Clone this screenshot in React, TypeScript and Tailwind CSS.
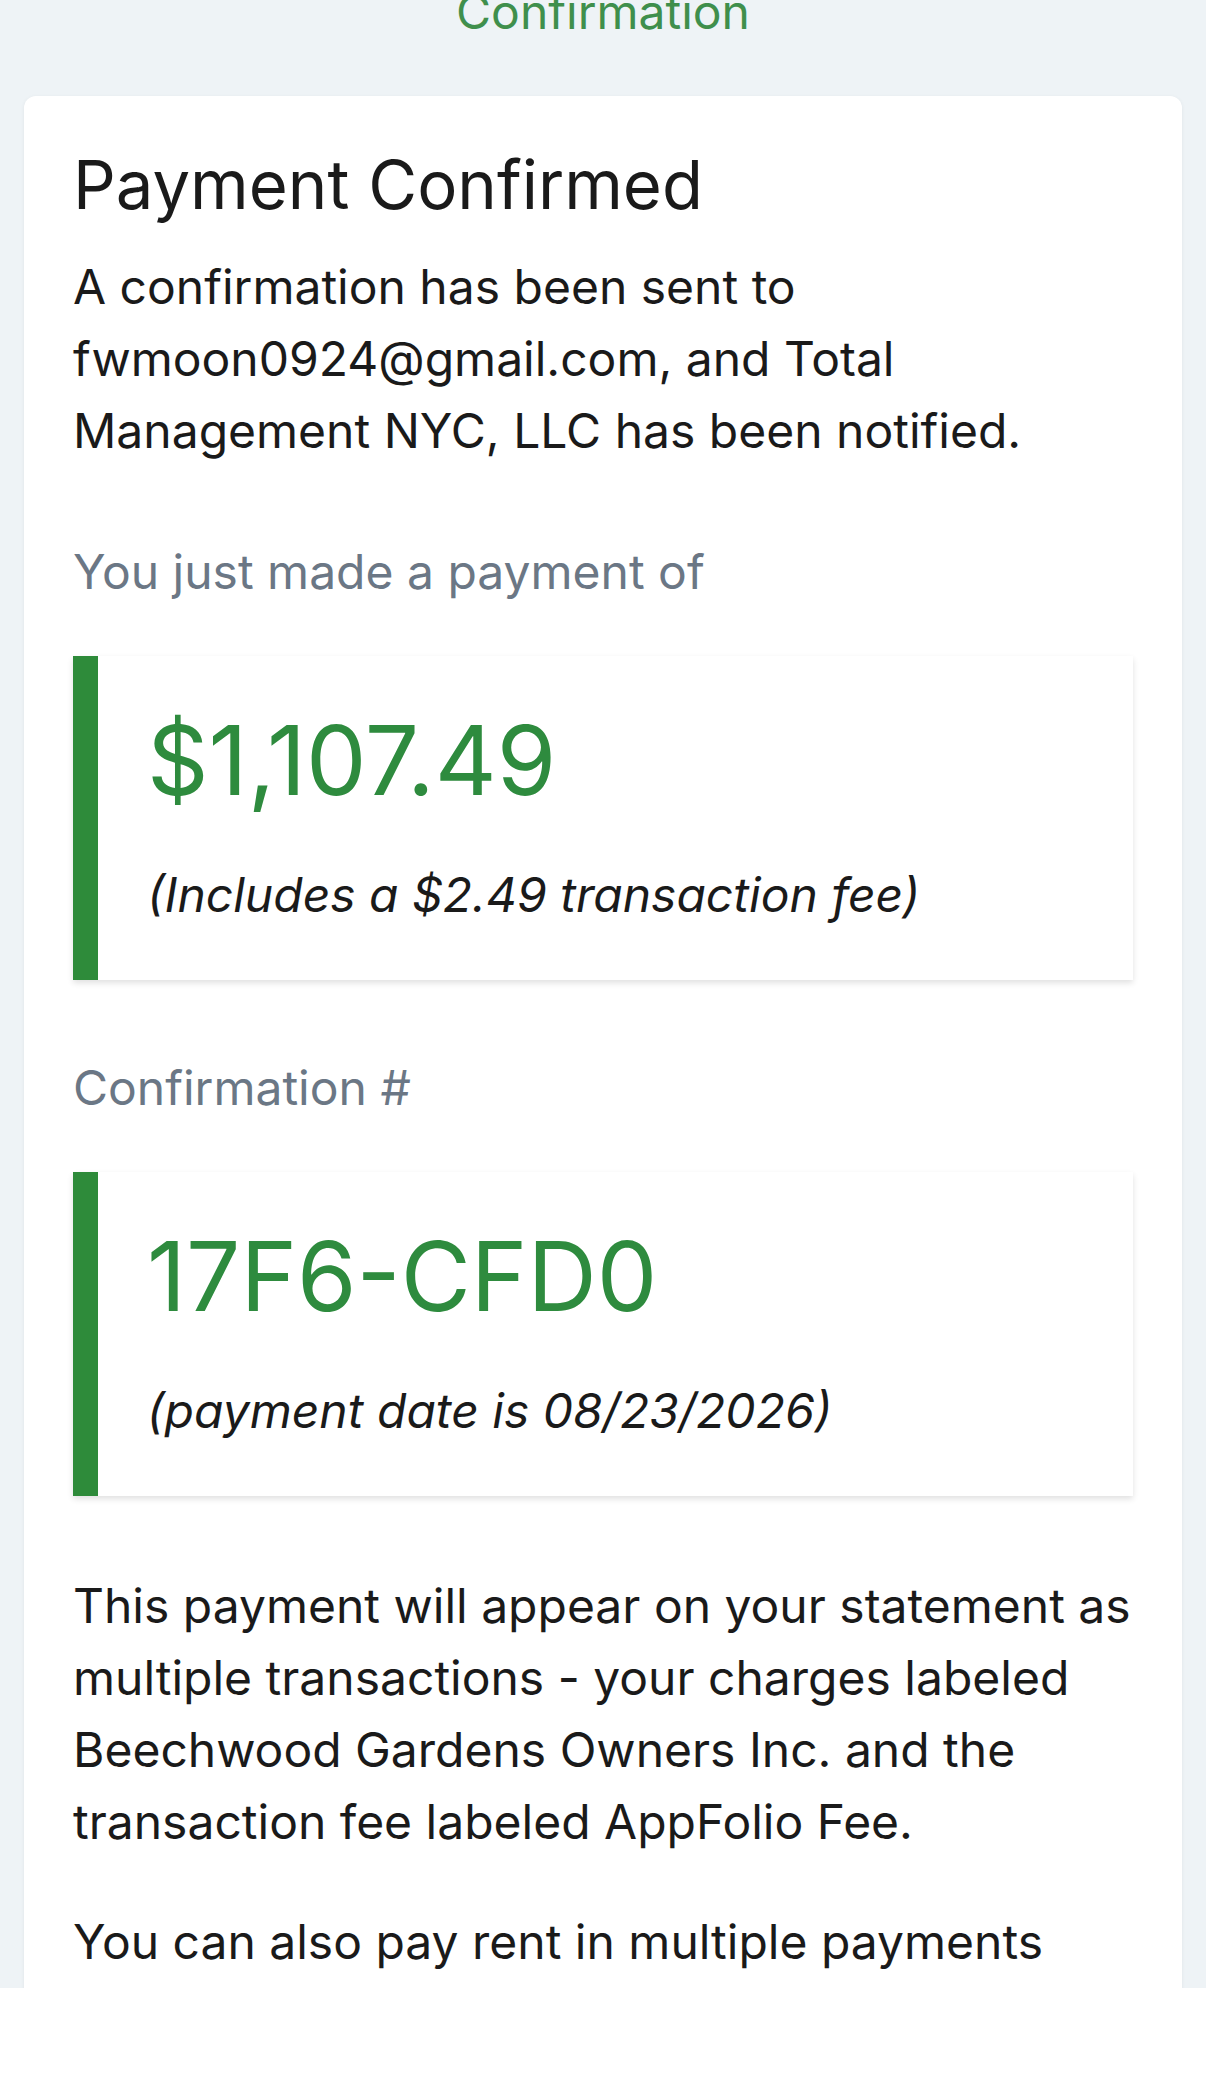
import React from "react";

const green = "text-[#2e8b3e]";

function HighlightBox({ value, note }: { value: string; note: string }) {
  return (
    <div className="mt-[48px] bg-white border-l-[25px] border-[#2e8b3a] pl-[49px] pr-[48px] pt-[48px] pb-[49px] shadow-[0_3px_6px_rgba(0,0,0,0.12)]">
      <div className={`text-[96px] leading-[112px] ${green}`}>{value}</div>
      <div className="mt-[43px] text-[48px] leading-[72px] italic text-[#1a1a1a]">
        {note}
      </div>
    </div>
  );
}

export default function App() {
  return (
    <div
      className="w-[1206px] h-[2089px] flex flex-col bg-white"
      style={{ fontFamily: "Inter, 'Noto Sans', sans-serif" }}
    >
      <div className="h-[1988px] overflow-hidden bg-[#eef3f6]">
        {/* page title, scrolled partly out of view */}
        <div className="-mt-[24px] text-center text-[48px] leading-[72px] text-[#3f8f4c]">
          Confirmation
        </div>

        <div className="mx-[24px] mt-[48px] bg-white rounded-[12px] shadow-[0_1px_4px_rgba(0,0,0,0.06)] px-[49px] pt-[46px] pb-[120px]">
          <h1 className="text-[67px] leading-[86px] text-[#1a1a1a]">
            Payment Confirmed
          </h1>
          <p className="mt-[23px] text-[48px] leading-[72px] text-[#1a1a1a]">
            A confirmation has been sent to fwmoon0924@gmail.com, and Total
            Management NYC, LLC has been notified.
          </p>

          <p className="mt-[69px] text-[48px] leading-[72px] text-[#6b7785]">
            You just made a payment of
          </p>
          <HighlightBox
            value="$1,107.49"
            note="(Includes a $2.49 transaction fee)"
          />

          <p className="mt-[72px] text-[48px] leading-[72px] text-[#6b7785]">
            Confirmation #
          </p>
          <HighlightBox value="17F6-CFD0" note="(payment date is 08/23/2026)" />

          <p className="mt-[74px] text-[48px] leading-[72px] text-[#1a1a1a]">
            This payment will appear on your statement as multiple transactions
            - your charges labeled Beechwood Gardens Owners Inc. and the
            transaction fee labeled AppFolio Fee.
          </p>
          <p className="mt-[48px] text-[48px] leading-[72px] text-[#1a1a1a]">
            You can also pay rent in multiple payments
          </p>
        </div>
      </div>
      <div className="flex-1 bg-white" />
    </div>
  );
}
